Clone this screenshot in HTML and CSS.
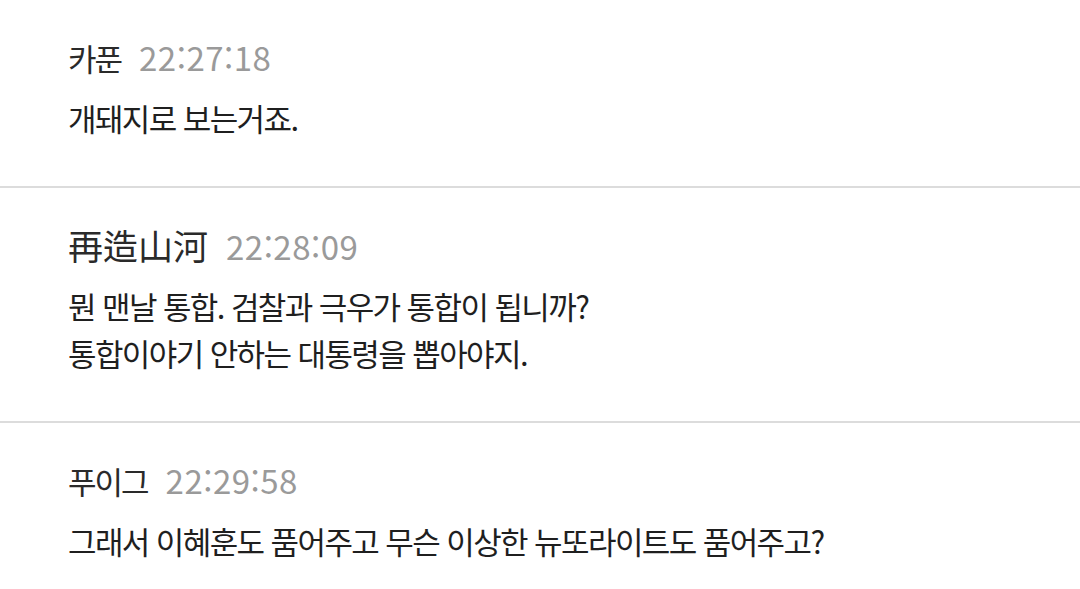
FILE: index.html
```html
<!DOCTYPE html>
<html lang="ko">
<head>
<meta charset="utf-8">
<title>댓글</title>
<link rel="stylesheet" href="styles.css">
</head>
<body>
<div class="list">
  <section class="item">
    <div class="head"><span class="name">카푼</span><span class="time">22:27:18</span></div>
    <div class="msg">개돼지로 보는거죠.</div>
  </section>
  <section class="item">
    <div class="head"><span class="name han">再造山河</span><span class="time">22:28:09</span></div>
    <div class="msg">뭔 맨날 통합. 검찰과 극우가 통합이 됩니까?<br>통합이야기 안하는 대통령을 뽑아야지.</div>
  </section>
  <section class="item">
    <div class="head"><span class="name">푸이그</span><span class="time">22:29:58</span></div>
    <div class="msg">그래서 이혜훈도 품어주고 무슨 이상한 뉴또라이트도 품어주고?</div>
  </section>
</div>
</body>
</html>
```
FILE: styles.css
```css
html, body {
  margin: 0;
  padding: 0;
  background: #ffffff;
}
body {
  font-family: "Noto Sans CJK KR", "Noto Sans", sans-serif;
  color: #2b2b2b;
}
.list {
  display: flex;
  flex-direction: column;
}
.item {
  padding: 37px 68px 45px;
  border-bottom: 2px solid #dcdcdc;
}
.head {
  display: flex;
  align-items: baseline;
  gap: 18px;
  height: 40px;
  line-height: 40px;
  margin-bottom: 17px;
}
.name {
  font-size: 31px;
  letter-spacing: -2px;
  color: #2a2a2a;
}
.name.han {
  font-size: 35px;
  letter-spacing: 0;
}
.time {
  font-size: 33px;
  color: #9a9a9a;
  letter-spacing: 0.5px;
}
.msg {
  font-size: 31px;
  line-height: 47px;
  letter-spacing: -1.6px;
  color: #1f1f1f;
}
```
